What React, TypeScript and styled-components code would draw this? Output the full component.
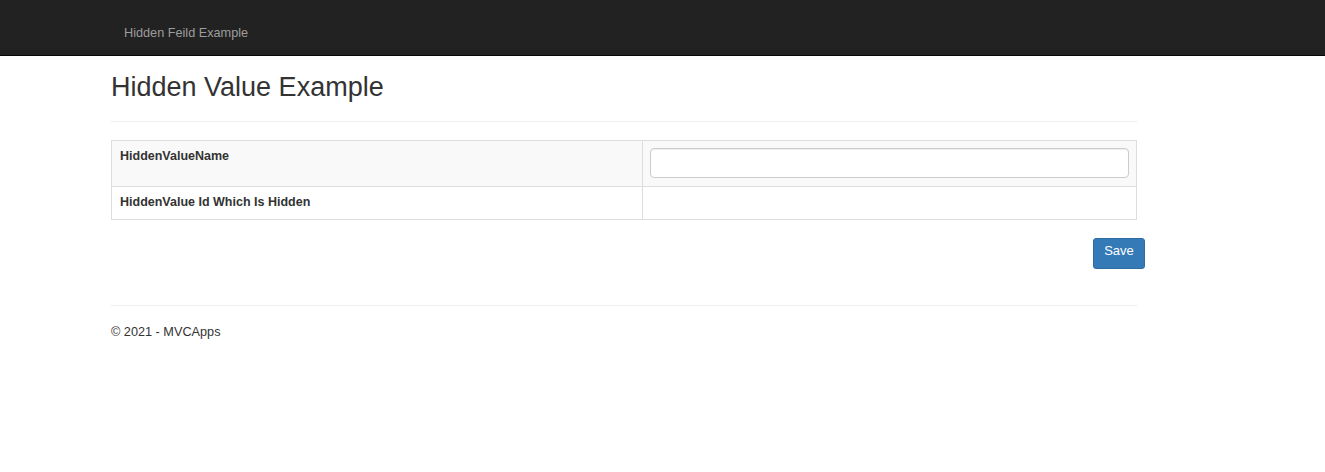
import React from "react";
import styled, { createGlobalStyle } from "styled-components";

const Global = createGlobalStyle`
  html, body { margin: 0; padding: 0; background: #fff; }
  body { font-family: "Liberation Sans", Arial, sans-serif; font-size: 13px; color: #333; }
  * { box-sizing: border-box; }
`;

const Navbar = styled.header`
  height: 56px;
  background: #222;
  border-bottom: 1px solid #080808;
  display: flex;
  align-items: center;
`;

const Brand = styled.a`
  margin-left: 124px;
  margin-top: 10px;
  color: #9d9d9d;
  font-size: 12.7px;
  text-decoration: none;
`;

const Container = styled.main`
  width: 1026px;
  margin-left: 111px;
`;

const Title = styled.h2`
  margin: 14px 0 0;
  font-size: 27px;
  font-weight: 400;
  line-height: 34px;
  color: #333;
`;

const Rule = styled.hr`
  margin: 17px 0 0;
  border: 0;
  border-top: 1px solid #eee;
`;

const Table = styled.table`
  margin-top: 18px;
  width: 100%;
  border-collapse: collapse;
  border: 1px solid #ddd;
`;

const Row = styled.tr<{ $striped?: boolean }>`
  background: ${(p) => (p.$striped ? "#f9f9f9" : "#fff")};
`;

const Cell = styled.td<{ $label?: boolean }>`
  border: 1px solid #ddd;
  padding: 7px 8px 8px;
  vertical-align: top;
  font-size: 12.5px;
  line-height: 17px;
  font-weight: ${(p) => (p.$label ? 700 : 400)};
  width: ${(p) => (p.$label ? "531px" : "auto")};
`;

const Input = styled.input`
  display: block;
  width: calc(100% + 2px);
  margin-left: -1px;
  height: 30px;
  border: 1px solid #ccc;
  border-radius: 4px;
  box-shadow: inset 0 1px 1px rgba(0, 0, 0, 0.075);
  padding: 4px 10px;
  font-size: 13px;
  background: #fff;
`;

const Actions = styled.div`
  display: flex;
  justify-content: flex-end;
  margin-top: 18px;
  margin-right: -8px;
`;

const Button = styled.button`
  width: 52px;
  height: 31px;
  background: #337ab7;
  border: 1px solid #2e6da4;
  border-radius: 3px;
  color: #fff;
  font-family: "Liberation Sans", Arial, sans-serif;
  font-size: 13px;
  padding: 0 0 6px;
`;

const FooterRule = styled.hr`
  margin: 36px 0 0;
  border: 0;
  border-top: 1px solid #eee;
`;

const Footer = styled.footer`
  margin-top: 18px;
  font-size: 12.7px;
  line-height: 17px;
  color: #333;
`;

export default function App() {
  return (
    <>
      <Global />
      <Navbar>
        <Brand href="#">Hidden Feild Example</Brand>
      </Navbar>
      <Container>
        <Title>Hidden Value Example</Title>
        <Rule />
        <Table>
          <tbody>
            <Row $striped>
              <Cell $label>HiddenValueName</Cell>
              <Cell>
                <Input type="text" />
              </Cell>
            </Row>
            <Row>
              <Cell $label>HiddenValue Id Which Is Hidden</Cell>
              <Cell>
                <input type="hidden" value="1" readOnly />
              </Cell>
            </Row>
          </tbody>
        </Table>
        <Actions>
          <Button type="button">Save</Button>
        </Actions>
        <FooterRule />
        <Footer>© 2021 - MVCApps</Footer>
      </Container>
    </>
  );
}
